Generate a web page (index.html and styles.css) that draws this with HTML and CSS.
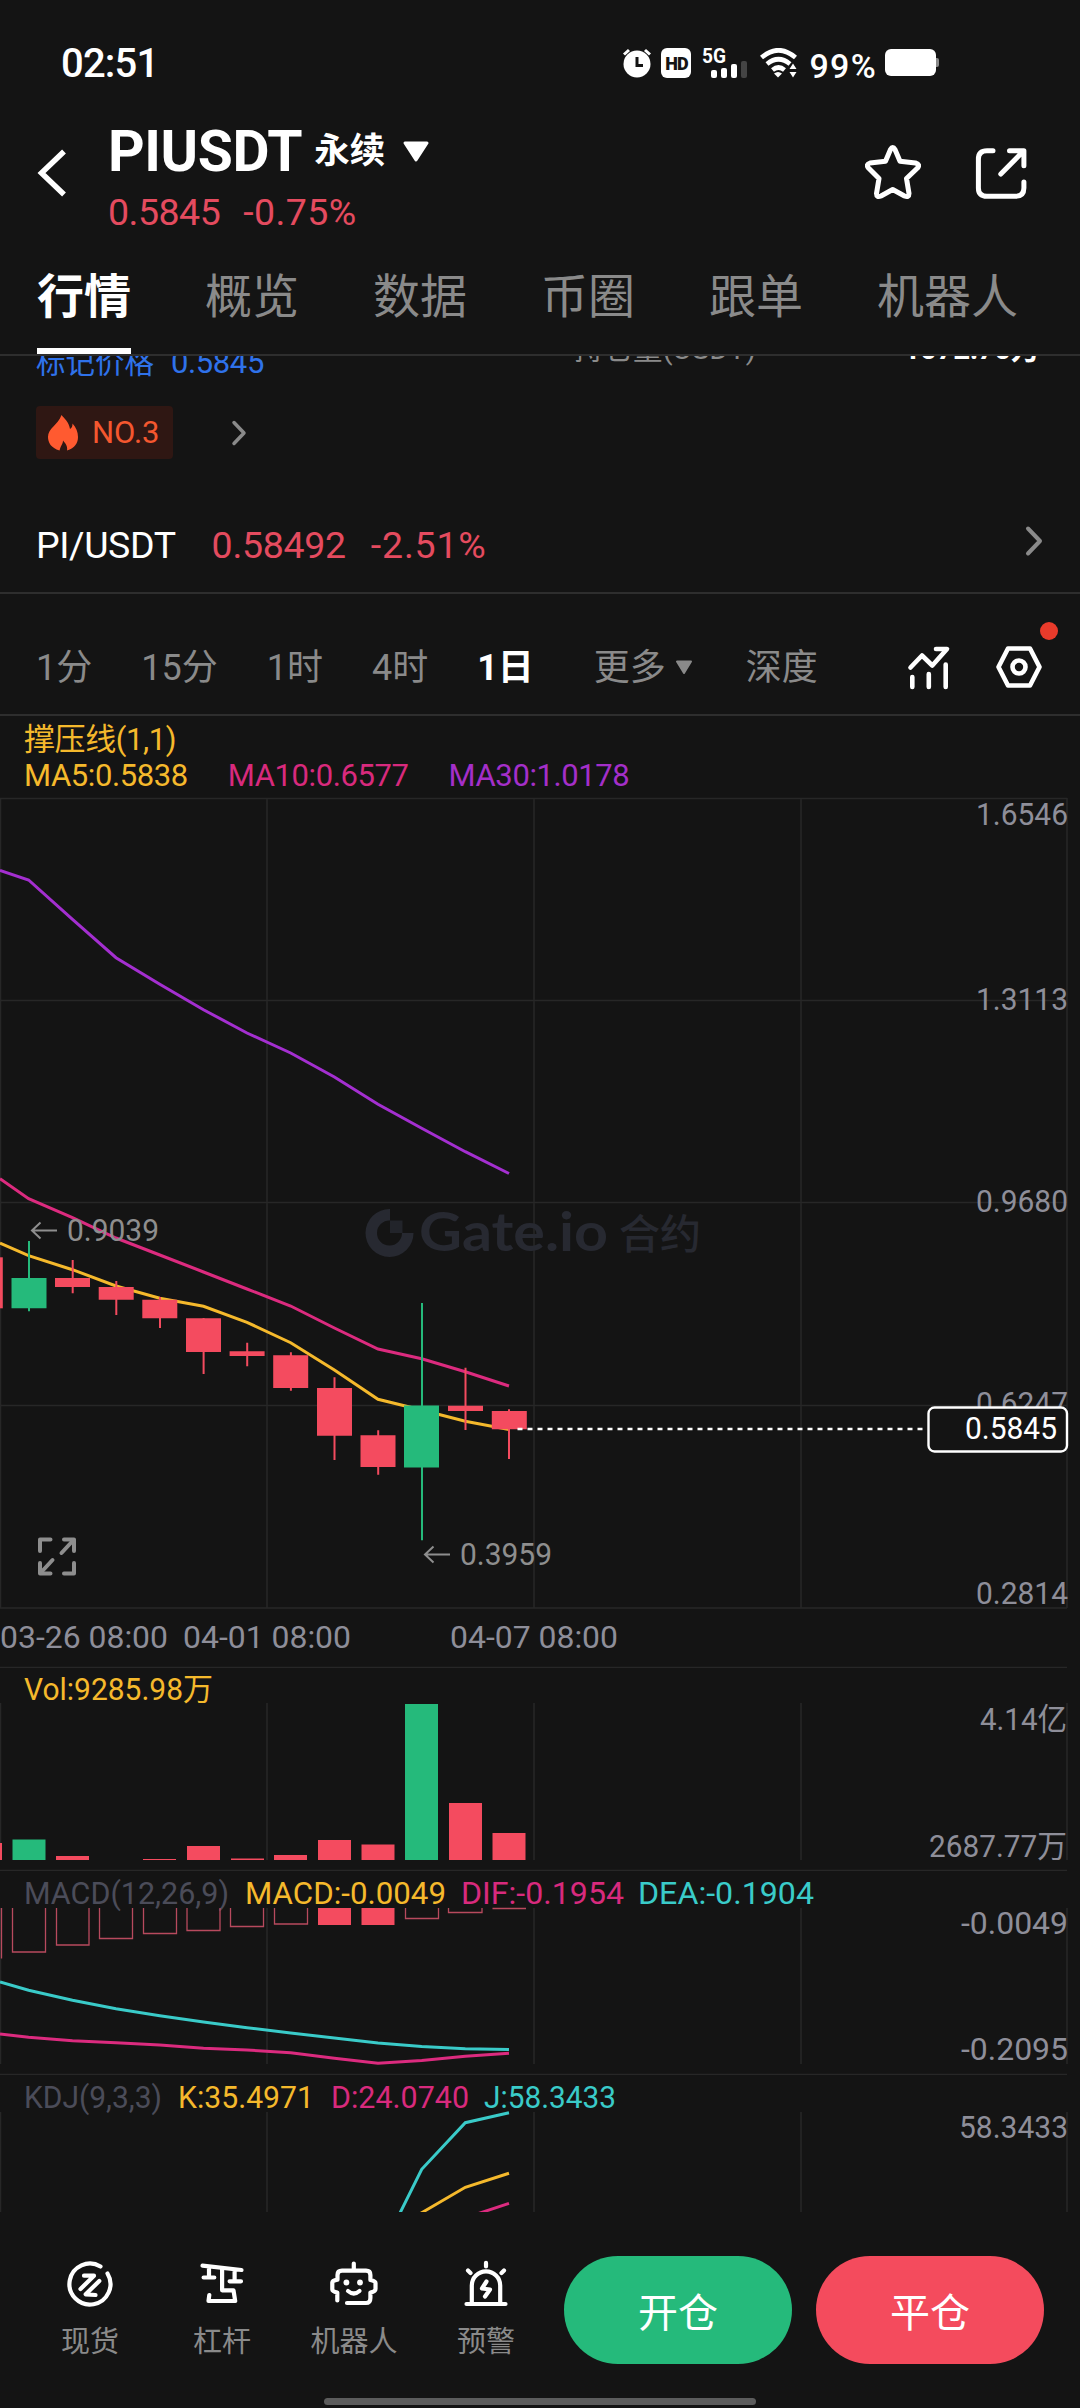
FILE: index.html
```html
<!DOCTYPE html>
<html lang="zh">
<head>
    <meta charset="UTF-8">
    <meta name="viewport" content="width=device-width, initial-scale=1.0">
    <title>PIUSDT 永续 - 行情</title>
    <link rel="stylesheet" href="styles.css">
</head>
<body>
    <!-- 系统状态栏 -->
    <div class="status-bar">
        <span class="time">02:51</span>
        <div class="status-icons">
            <svg class="icon-alarm" width="30" height="30" viewBox="0 0 30 30">
                <circle cx="15" cy="16" r="13.5" fill="#fff"/>
                <path d="M2 6.5L7 2M28 6.5L23 2" stroke="#fff" stroke-width="3"/>
                <path d="M15 9v8.500h6" fill="none" stroke="#141414" stroke-width="3"/>
            </svg>
            <span class="hd">HD</span>
            <svg class="icon-signal" width="46" height="30" viewBox="0 0 46 30">
                <text x="0" y="15" class="net" textLength="24" lengthAdjust="spacingAndGlyphs">5G</text>
                <rect x="9" y="22" width="6" height="8" rx="2" fill="#fff"/>
                <rect x="19" y="20" width="6" height="10" rx="2" fill="#fff"/>
                <rect x="29" y="16" width="6" height="14" rx="2" fill="#fff"/>
                <rect x="39" y="13" width="6" height="17" rx="2" fill="#444"/>
            </svg>
            <svg class="icon-wifi" width="38" height="30" viewBox="0 0 38 30">
                <g fill="none" stroke="#fff" stroke-width="4.600">
                    <path d="M1.500 9.500Q18.500 -5 35.500 9.500"/>
                    <path d="M7 16Q18.500 6.500 30 16"/>
                    <path d="M12.500 22Q18.500 17 24.500 22"/>
                </g>
                <path d="M14 25.500q4-3 8 0l-4 4z" fill="#fff"/>
                <path d="M29.500 21l3.500-5.500 3.500 5.500zM29.500 24l3.500 5.500 3.500-5.500z" fill="#fff"/>
            </svg>
            <span class="percent">99%</span>
            <svg width="54" height="28" viewBox="0 0 54 28">
                <rect x="0" y="0" width="51" height="27" rx="6" fill="#fff"/>
                <path d="M51 9h1a2 2 0 0 1 2 2v5a2 2 0 0 1-2 2h-1z" fill="#8a8a8a"/>
            </svg>
        </div>
    </div>

    <!-- 顶部标题 -->
    <header class="header">
        <svg class="back" width="30" height="48" viewBox="0 0 30 48">
            <path d="M27 2.500L4.500 24L27 45.500" fill="none" stroke="#fff" stroke-width="5.500"/>
        </svg>
        <div class="title-box">
            <div class="title">
                <h1>PIUSDT</h1>
                <span class="perpetual">永续</span>
                <svg width="28" height="22" viewBox="0 0 28 22">
                    <path d="M3 2h22L14 19z" fill="#fff" stroke="#fff" stroke-width="3" stroke-linejoin="round"/>
                </svg>
            </div>
            <div class="price"><span>0.5845</span><span class="change">-0.75%</span></div>
        </div>
        <div class="header-actions">
            <svg width="56" height="56" viewBox="0 0 56 56">
                <path d="M25.500 4.500Q27.700 0.500 30 4.500L35 16.200L50.500 18Q55.500 19.500 52.500 23L41.500 33.500L44 48.500Q44 53 39.500 51L27.700 44.500L16 51Q11.500 53 11.500 48.500L14 33.500L3.500 23Q0.500 19.500 5 18L20.500 16.200z" fill="none" stroke="#fff" stroke-width="5" stroke-linejoin="round"/>
            </svg>
            <svg width="56" height="56" viewBox="0 0 56 56">
                <g fill="none" stroke="#fff" stroke-width="5" stroke-linecap="round" stroke-linejoin="round">
                    <path d="M20 5.700H14Q5.400 5.700 5.400 14V43Q5.400 51.300 14 51.300H42.500Q50.900 51.300 50.900 43V37"/>
                    <path d="M36.500 5.700H50.900V20.700M27.800 29L50 6.500"/>
                </g>
            </svg>
        </div>
    </header>

    <nav class="tabs">
        <a class="tab active">行情</a>
        <a class="tab">概览</a>
        <a class="tab">数据</a>
        <a class="tab">币圈</a>
        <a class="tab">跟单</a>
        <a class="tab">机器人</a>
    </nav>

    <!-- 滚动到一半的行情信息 -->
    <section class="info">
        <div class="mark-price"><span class="cjk">标记价格</span><span>0.5845</span></div>
        <div class="open-interest"><span>持仓量(USDT)</span><strong>1072.70万</strong></div>
    </section>

    <div class="rank">
        <div class="rank-badge">
            <svg width="32" height="36" viewBox="0 0 32 36">
                <path d="M14.500 0C17 3 22 7 23 14C25 13 25.500 11 25.500 8.500C29 12 31 17 31 22C31 28 28 33 20 35.500C21 31 18 28 16 25.500C16 29 14 30 12.500 35.500C4 33 1 27.500 1 22C1 13 11 10 14.500 0z" fill="#ff5a30"/>
            </svg>
            <span>NO.3</span>
        </div>
        <svg width="16" height="26" viewBox="0 0 16 26">
            <path d="M3 2.500L13 13L3 23.500" fill="none" stroke="#8a8a8a" stroke-width="3.500" stroke-linecap="round" stroke-linejoin="round"/>
        </svg>
    </div>

    <div class="pair">
        <span class="pair-name">PI/USDT</span>
        <span class="pair-price">0.58492</span>
        <span class="pair-change">-2.51%</span>
        <svg class="pair-arrow" width="20" height="32" viewBox="0 0 20 32">
            <path d="M4 3.500L16 16L4 28.500" fill="none" stroke="#8a8a8a" stroke-width="4" stroke-linecap="round" stroke-linejoin="round"/>
        </svg>
    </div>

    <!-- K线周期 -->
    <div class="periods">
        <span>1分</span>
        <span>15分</span>
        <span>1时</span>
        <span>4时</span>
        <span class="active">1日</span>
        <span class="more">更多
            <svg width="18" height="15" viewBox="0 0 18 15"><path d="M2 1.500h14L9 13z" fill="#8a8a8a" stroke="#8a8a8a" stroke-width="2" stroke-linejoin="round"/></svg>
        </span>
        <span>深度</span>
        <div class="period-tools">
            <svg width="48" height="48" viewBox="0 0 48 48">
                <g fill="none" stroke="#fff" stroke-width="4.600" stroke-linecap="round" stroke-linejoin="round">
                    <path d="M5.500 24.500L17 12.500L27.300 22.500L42 6H31"/>
                    <path d="M7.300 34V44M23.800 31V44M40.700 21.500V44"/>
                </g>
            </svg>
            <div class="setting">
                <svg width="48" height="48" viewBox="0 0 48 48">
                    <g fill="none" stroke="#fff" stroke-width="4.600" stroke-linejoin="round">
                        <path d="M3.500 24L13 5.500H35L44.500 24L35 42.500H13z"/>
                        <circle cx="24" cy="24" r="6.500"/>
                    </g>
                </svg>
                <i class="red-dot"></i>
            </div>
        </div>
    </div>

    <!-- 指标图例 -->
    <div class="legend">
        <div class="legend-row yellow">撑压线(1,1)</div>
        <div class="legend-row">
            <span class="yellow">MA5:0.5838</span>
            <span class="pink">MA10:0.6577</span>
            <span class="purple">MA30:1.0178</span>
        </div>
    </div>

    <!-- 主图 -->
    <svg class="chart" width="1080" height="876" viewBox="0 792 1080 876">
        <path class="grid" d="M0 798.500H1067M0 1000.500H1067M0 1202.500H1067M0 1405.500H1067M0 1608H1067M0 1667.500H1067M0.500 798V1608M267 798V1608M534 798V1608M801 798V1608M1067 798V1608"/>

        <g class="watermark">
            <path d="M390 1209A24 24 0 1 0 413.500 1233H402A12.500 12.500 0 1 1 390 1220.500z"/>
            <path d="M390 1220.500H402.500V1233H390z" opacity="0.75"/>
            <text x="419" y="1251" class="wm-logo" textLength="189" lengthAdjust="spacingAndGlyphs">Gate.io</text>
            <text x="619" y="1249" class="wm-cn" textLength="82">合约</text>
        </g>

        <g class="axis">
            <text x="976" y="825" textLength="92" lengthAdjust="spacingAndGlyphs">1.6546</text>
            <text x="976" y="1009.500" textLength="92" lengthAdjust="spacingAndGlyphs">1.3113</text>
            <text x="976" y="1211.500" textLength="92" lengthAdjust="spacingAndGlyphs">0.9680</text>
            <text x="976" y="1414" textLength="92" lengthAdjust="spacingAndGlyphs">0.6247</text>
            <text x="976" y="1603.500" textLength="92" lengthAdjust="spacingAndGlyphs">0.2814</text>
            <text x="0" y="1648" textLength="168" lengthAdjust="spacingAndGlyphs">03-26 08:00</text>
            <text x="183" y="1648" textLength="168" lengthAdjust="spacingAndGlyphs">04-01 08:00</text>
            <text x="450" y="1648" textLength="168" lengthAdjust="spacingAndGlyphs">04-07 08:00</text>
        </g>

        <polyline class="line purple-line" points="0,870.3 28.6,880 72.5,919.3 116,957.7 159.8,984.3 203.5,1009.7 247,1033 290.7,1053 334.4,1077 378,1104.3 421.7,1128.3 465.3,1151.7 509,1173.5"/>
        <polyline class="line pink-line" points="0,1178.7 28.6,1198.7 72.5,1217.7 116,1238 159.8,1255 203.5,1272 247,1289 290.7,1306 334.4,1328 378,1349 421.7,1358.7 465.3,1371.7 509,1386"/>
        <polyline class="line yellow-line" points="0,1243 28.6,1255.7 72.5,1269.7 116,1286 159.8,1298.3 203.5,1306.3 247,1322.3 290.7,1342.7 334.4,1370 378,1399.3 421.7,1410 465.3,1421.3 509,1429.5"/>

        <g class="up">
            <path d="M11.500 1278h35v30.300h-35zM28 1241h2v70.300h-2z"/>
            <path d="M404 1405.500h35v62h-35zM421 1303h2v237.300h-2z"/>
        </g>
        <g class="down">
            <path d="M0 1257.300h2.800v51H0z"/>
            <path d="M55 1278h35v9h-35zM71.700 1260h2v33.300h-2z"/>
            <path d="M98.700 1287h35v12.700h-35zM115.300 1281h2v34h-2z"/>
            <path d="M142.300 1299.700h35v18.600h-35zM159 1297h2v31h-2z"/>
            <path d="M186 1318.300h35v33.700h-35zM202.600 1318h2v56h-2z"/>
            <path d="M229.600 1351.300h35v4.700h-35zM246.200 1342.700h2v23.500h-2z"/>
            <path d="M273.200 1355.300h35v32.700h-35zM289.900 1352.300h2v38.400h-2z"/>
            <path d="M317 1388h35v47.700h-35zM333.500 1377.300h2v82.700h-2z"/>
            <path d="M360.500 1435.300h35v31.700h-35zM377.200 1430.300h2v44.400h-2z"/>
            <path d="M448 1405.700h35v5.300h-35zM464.500 1367.700h2v62.300h-2z"/>
            <path d="M491.800 1411h35v18.300h-35zM508 1409.300h2v49.700h-2z"/>
        </g>

        <!-- 最高 / 最低标注 -->
        <g class="mark">
            <path d="M57 1230.500H33M40.500 1222.500L32 1230.500L40.500 1238.500"/>
            <text x="67" y="1240.700" textLength="92" lengthAdjust="spacingAndGlyphs">0.9039</text>
            <path d="M450 1554.500H426M433.500 1546.500L425 1554.500L433.500 1562.500"/>
            <text x="460" y="1564.700" textLength="92" lengthAdjust="spacingAndGlyphs">0.3959</text>
        </g>

        <!-- 最新价 -->
        <path d="M517.500 1429H923" stroke="#fff" stroke-width="2.400" stroke-dasharray="5 5"/>
        <rect x="928.500" y="1407.500" width="138.500" height="44" rx="6" fill="#141414" stroke="#fff" stroke-width="2.400"/>
        <text x="965" y="1438.700" class="last" textLength="92" lengthAdjust="spacingAndGlyphs">0.5845</text>

        <g class="expand">
            <path d="M40 1551V1539.500H50.500M64 1539.500H74V1551M74 1563V1573.500H64M50.500 1573.500H40V1563"/>
            <path d="M61.500 1553L73.500 1540M52.500 1560L40.500 1573"/>
        </g>
    </svg>

    <!-- 成交量 -->
    <svg class="chart" width="1080" height="203" viewBox="0 1668 1080 203">
        <path class="grid" d="M0 1870.500H1067M0.500 1703V1860M267 1703V1860M534 1703V1860M801 1703V1860M1067 1703V1860"/>
        <text x="24" y="1700" class="yellow" textLength="189" lengthAdjust="spacingAndGlyphs">Vol:9285.98万</text>
        <g class="up">
            <path d="M12.500 1839.500h33v20.500h-33zM405 1704h33v156h-33z"/>
        </g>
        <g class="down">
            <path d="M0 1843h2v17H0z"/>
            <path d="M56 1856h33v4h-33z"/>
            <path d="M143 1859h33v1h-33z"/>
            <path d="M187 1846h33v14h-33z"/>
            <path d="M231 1858.500h33v1.500h-33z"/>
            <path d="M274 1855h33v5h-33z"/>
            <path d="M318 1840h33v20h-33z"/>
            <path d="M361.500 1844.500h33v15.500h-33z"/>
            <path d="M449 1803h33v57h-33z"/>
            <path d="M492.500 1833h33v27h-33z"/>
        </g>
        <g class="axis">
            <text x="980" y="1730" textLength="87" lengthAdjust="spacingAndGlyphs">4.14亿</text>
            <text x="929" y="1856.500" textLength="138" lengthAdjust="spacingAndGlyphs">2687.77万</text>
        </g>
    </svg>

    <!-- MACD -->
    <svg class="chart" width="1080" height="204" viewBox="0 1871 1080 204">
        <path class="grid" d="M0 2074.500H1067M0.500 1908V2064M267 1908V2064M534 1908V2064M801 1908V2064M1067 1908V2064"/>
        <text x="24" y="1904" class="dim" textLength="205" lengthAdjust="spacingAndGlyphs">MACD(12,26,9)</text>
        <text x="245" y="1904" class="yellow" textLength="201" lengthAdjust="spacingAndGlyphs">MACD:-0.0049</text>
        <text x="461" y="1904" class="pink" textLength="163" lengthAdjust="spacingAndGlyphs">DIF:-0.1954</text>
        <text x="638" y="1904" class="cyan" textLength="176" lengthAdjust="spacingAndGlyphs">DEA:-0.1904</text>
        <path class="hollow" d="M1.500 1908V1958.500M12.500 1908v44h33v-44M56.500 1908v37h32.500v-37M99.500 1908v30.500h33v-30.500M143.500 1908v25.500h33v-25.500M187 1908v22.500h33v-22.500M230.500 1908v18.500h33v-18.500M274.500 1908v16h33v-16M405.500 1908v10.500h33v-10.500M448.500 1908v4.500h33.500v-4.500M492.500 1908.500h33.500"/>
        <g class="down">
            <path d="M318 1908h33v17h-33zM361.500 1908h33v17h-33z"/>
        </g>
        <polyline class="line cyan-line" points="0,1982 28.6,1990.3 72.5,2000.3 116,2008.7 159.8,2015.7 203.5,2022 247,2027.7 290.7,2033 334.4,2038 378,2043 421.7,2046.5 465.3,2048.7 509,2049.5"/>
        <polyline class="line pink-line" points="0,2034 28.6,2037.3 72.5,2040.7 116,2042.7 159.8,2045 203.5,2048.3 247,2050 290.7,2052.7 334.4,2058.3 378,2063.3 421.7,2060.5 465.3,2056.3 509,2053.3"/>
        <g class="axis">
            <text x="961" y="1934" textLength="107" lengthAdjust="spacingAndGlyphs">-0.0049</text>
            <text x="961" y="2060" textLength="107" lengthAdjust="spacingAndGlyphs">-0.2095</text>
        </g>
    </svg>

    <!-- KDJ -->
    <svg class="chart" width="1080" height="137" viewBox="0 2075 1080 137">
        <path class="grid" d="M0.500 2112V2212M267 2112V2212M534 2112V2212M801 2112V2212M1067 2112V2212"/>
        <text x="24" y="2107.500" class="dim" textLength="138" lengthAdjust="spacingAndGlyphs">KDJ(9,3,3)</text>
        <text x="178" y="2107.500" class="yellow" textLength="136" lengthAdjust="spacingAndGlyphs">K:35.4971</text>
        <text x="331" y="2107.500" class="pink" textLength="138" lengthAdjust="spacingAndGlyphs">D:24.0740</text>
        <text x="484" y="2107.500" class="cyan" textLength="132" lengthAdjust="spacingAndGlyphs">J:58.3433</text>
        <polyline class="line cyan-line" points="399,2215 421.7,2169.3 465.3,2122.7 509,2112.7"/>
        <polyline class="line yellow-line" points="418,2215 421.7,2212.7 465.3,2187.3 509,2173.3"/>
        <polyline class="line pink-line" points="474,2215 509,2203.3"/>
        <g class="axis">
            <text x="959" y="2138" textLength="109" lengthAdjust="spacingAndGlyphs">58.3433</text>
        </g>
    </svg>

    <!-- 底部操作栏 -->
    <footer class="footer">
        <div class="actions">
            <div class="tool">
                <svg width="48" height="48" viewBox="0 0 48 48">
                    <path d="M34.500 6.500A20.500 20.500 0 1 0 41.500 13.500"/>
                    <path d="M18 15.700H28L14.500 29M33.300 21L19.700 34.300L29.500 35"/>
                </svg>
                <span>现货</span>
            </div>
            <div class="tool">
                <svg width="48" height="48" viewBox="0 0 48 48">
                    <path d="M4.500 5.700L43.500 10M11 7.500V17.500M5.600 17.500H16.300M36.600 10.500V21.300M31.600 21.300H43"/>
                    <path d="M24.100 8.500V30.300H35.500L37.200 41H10.500L11.300 35"/>
                </svg>
                <span>杠杆</span>
            </div>
            <div class="tool">
                <svg width="48" height="48" viewBox="0 0 48 48">
                    <path d="M23.800 3.500V9M7.300 40.500V32.500Q2.300 31.500 2.300 29.500V22.500Q2.300 20.500 7.500 19.700V15Q7.500 10.700 12 10.700H36Q40.400 10.700 40.400 15V20Q45.500 21 45.500 23V29Q45.500 31.500 40.400 32.500V38Q40.400 43 36 43H17"/>
                    <path d="M18 31q5.800 5 11.500 0"/>
                    <circle cx="16.400" cy="22.500" r="2.900" class="eye"/>
                    <circle cx="30" cy="22.500" r="2.900" class="eye"/>
                </svg>
                <span>机器人</span>
            </div>
            <div class="tool">
                <svg width="48" height="48" viewBox="0 0 48 48">
                    <path d="M4.500 44H43.500M9.800 43V25.500A14 14 0 0 1 38.200 25.500V43M24 2.800V6.500M6 10.500L8.500 13M42 10.500L39.500 13"/>
                    <path d="M24.500 21.500L20 28.500L28 29.500L23 36.500"/>
                </svg>
                <span>预警</span>
            </div>
            <button class="button open">开仓</button>
            <button class="button close">平仓</button>
        </div>
        <div class="home-indicator"></div>
    </footer>
</body>
</html>
```

FILE: styles.css
```css
* {
    margin: 0;
    padding: 0;
    box-sizing: border-box;
}

body {
    width: 1080px;
    height: 2408px;
    overflow: hidden;
    background: #141414;
    color: #fff;
    font-family: Roboto, "Noto Sans CJK SC", sans-serif;
}

svg {
    display: block;
    flex-shrink: 0;
}

/* 状态栏 */
.status-bar {
    display: flex;
    justify-content: space-between;
    align-items: center;
    height: 126px;
    padding: 0 141px 0 61px;
}

.time {
    font-size: 40px;
    font-weight: 500;
    letter-spacing: -0.8px;
}

.status-icons {
    display: flex;
    align-items: center;
}

.hd {
    width: 30px;
    height: 30px;
    margin-left: 9px;
    border-radius: 6px;
    background: #fff;
    color: #141414;
    font-size: 18px;
    font-weight: 900;
    line-height: 31px;
    letter-spacing: -1px;
    text-align: center;
}

.icon-signal {
    margin-left: 11px;
    overflow: visible;
}

.net {
    fill: #fff;
    font-size: 20px;
    font-weight: 700;
}

.icon-wifi {
    margin-left: 12px;
}

.percent {
    margin: 5px 8px 0 11px;
    font-size: 34px;
    font-weight: 500;
    line-height: 36px;
    letter-spacing: 1.3px;
}

/* 标题 */
.header {
    display: flex;
    align-items: flex-start;
    height: 121px;
    padding: 0 51px 0 37px;
}

.back {
    margin-top: 23px;
}

.title-box {
    margin-left: 39px;
}

.title {
    display: flex;
    align-items: center;
    height: 52px;
    padding-left: 2px;
}

.title h1 {
    font-size: 57px;
    font-weight: 700;
    line-height: 52px;
    letter-spacing: -0.4px;
}

.perpetual {
    margin: 0 17px 3px 12px;
    font-size: 35.5px;
    font-weight: 700;
    line-height: 48px;
}

.price {
    display: flex;
    gap: 23px;
    padding-left: 2px;
    color: #e44b5f;
    font-size: 37.5px;
    line-height: 69px;
    letter-spacing: -0.5px;
}

.price .change {
    letter-spacing: 0.4px;
}

.header-actions {
    display: flex;
    gap: 52px;
    margin: 19px 0 0 auto;
}

/* 标签页 */
.tabs {
    display: flex;
    gap: 74px;
    height: 109px;
    padding-left: 37px;
    border-bottom: 2px solid #2e2e2e;
}

.tab {
    height: 107px;
    color: #8a8a8a;
    font-size: 47px;
    line-height: 100px;
}

.tab.active {
    color: #fff;
    font-weight: 700;
    border-bottom: 6px solid #fff;
}

/* 行情信息 */
.info {
    display: flex;
    justify-content: space-between;
    height: 50px;
    padding: 0 41px 0 36px;
    overflow: hidden;
    font-size: 31px;
    line-height: 40px;
}

.mark-price {
    display: flex;
    gap: 17px;
    margin-top: -13px;
    color: #2f72ea;
    letter-spacing: -0.4px;
}

.mark-price .cjk {
    font-size: 29.5px;
    letter-spacing: 0;
}

.open-interest {
    display: flex;
    justify-content: space-between;
    width: 466px;
    margin: -27px -1px 0 0;
    color: #8a8a8a;
    font-size: 29.5px;
}

.open-interest strong {
    color: #fff;
    letter-spacing: -0.4px;
}

.rank {
    display: flex;
    align-items: center;
    gap: 58px;
    height: 53px;
    padding-left: 36px;
}

.rank-badge {
    display: flex;
    align-items: center;
    gap: 13px;
    width: 137px;
    height: 53px;
    padding-left: 11px;
    border-radius: 4px;
    background: #2f1713;
    color: #f4572f;
    font-size: 31px;
}

.pair {
    display: flex;
    align-items: center;
    height: 96px;
    margin-top: 39px;
    padding: 0 36px;
    border-bottom: 2px solid #2e2e2e;
    font-size: 37.5px;
}

.pair-name {
    letter-spacing: -0.4px;
}

.pair-price,
.pair-change {
    color: #e44b5f;
}

.pair-price {
    margin-left: 36px;
    letter-spacing: -0.3px;
}

.pair-change {
    margin-left: 25px;
    letter-spacing: 0.8px;
}

.pair-arrow {
    margin: 0 0 8px auto;
}

/* 周期选择 */
.periods {
    display: flex;
    align-items: center;
    gap: 49px;
    height: 122px;
    padding: 27px 37px 0 36px;
    border-bottom: 2px solid #2e2e2e;
    color: #8a8a8a;
    font-size: 36px;
    line-height: 44px;
}

.periods .active {
    color: #fff;
    font-weight: 700;
}

.more {
    display: flex;
    align-items: center;
    gap: 9px;
    margin: 0 4px 0 11px;
}

.period-tools {
    display: flex;
    gap: 42px;
    margin: -2px 0 0 auto;
}

.setting {
    position: relative;
}

.red-dot {
    position: absolute;
    top: -21px;
    right: -15px;
    width: 18px;
    height: 18px;
    border-radius: 50%;
    background: #e93b2b;
}

/* 图例 */
.legend {
    height: 76px;
    padding: 6px 0 0 24px;
    font-size: 31px;
    line-height: 35.5px;
    letter-spacing: -0.4px;
}

.legend-row {
    display: flex;
    gap: 40px;
    height: 35.5px;
}

.yellow {
    color: #f5b92c;
    fill: #f5b92c;
}

.pink {
    color: #d82a7d;
    fill: #d82a7d;
}

.purple {
    color: #a42fc9;
}

.cyan {
    fill: #3acbc9;
}

.dim {
    fill: #4b4c59;
}

/* 图表 */
.chart {
    font-size: 31px;
}

.grid {
    fill: none;
    stroke: #272727;
    stroke-width: 1.5;
}

.axis {
    fill: #8e8e99;
}

.line {
    fill: none;
    stroke-width: 3;
}

.purple-line {
    stroke: #a42fd0;
}

.pink-line {
    stroke: #dc2b7f;
}

.yellow-line {
    stroke: #f5b92c;
}

.cyan-line {
    stroke: #3acbc9;
}

.up {
    fill: #25ba7b;
}

.down {
    fill: #f44b5f;
}

.hollow {
    fill: none;
    stroke: #b84a5e;
    stroke-width: 1.3;
}

.mark path {
    fill: none;
    stroke: #8e8e8e;
    stroke-width: 2;
}

.mark text {
    fill: #8e8e8e;
}

.last {
    fill: #fff;
}

.expand path {
    fill: none;
    stroke: #8e8e8e;
    stroke-width: 4;
    stroke-linecap: round;
    stroke-linejoin: round;
}

.watermark {
    fill: #272931;
}

.wm-logo {
    font-family: Lato, sans-serif;
    font-size: 53px;
    font-weight: 700;
}

.wm-cn {
    font-size: 41px;
    font-weight: 500;
}

/* 底部 */
.footer {
    height: 196px;
    padding-top: 44px;
}

.actions {
    display: flex;
    height: 108px;
    padding-left: 24px;
}

.tool {
    display: flex;
    flex-direction: column;
    align-items: center;
    width: 132px;
    padding-top: 4px;
    color: #8a8a8a;
    font-size: 29px;
    line-height: 40px;
}

.tool svg {
    margin-bottom: 14px;
    fill: none;
    stroke: #fff;
    stroke-width: 4.2;
    stroke-linecap: round;
    stroke-linejoin: round;
}

.tool .eye {
    fill: #fff;
    stroke: none;
}

.button {
    width: 228px;
    height: 108px;
    border: none;
    border-radius: 54px;
    color: #fff;
    font-family: inherit;
    font-size: 40px;
    cursor: pointer;
}

.open {
    margin-left: 12px;
    background: #25ba7b;
}

.close {
    margin-left: 24px;
    background: #f44b5d;
}

.home-indicator {
    width: 432px;
    height: 7px;
    margin: 34px auto 0;
    border-radius: 4px;
    background: #5c5c5c;
}
```
